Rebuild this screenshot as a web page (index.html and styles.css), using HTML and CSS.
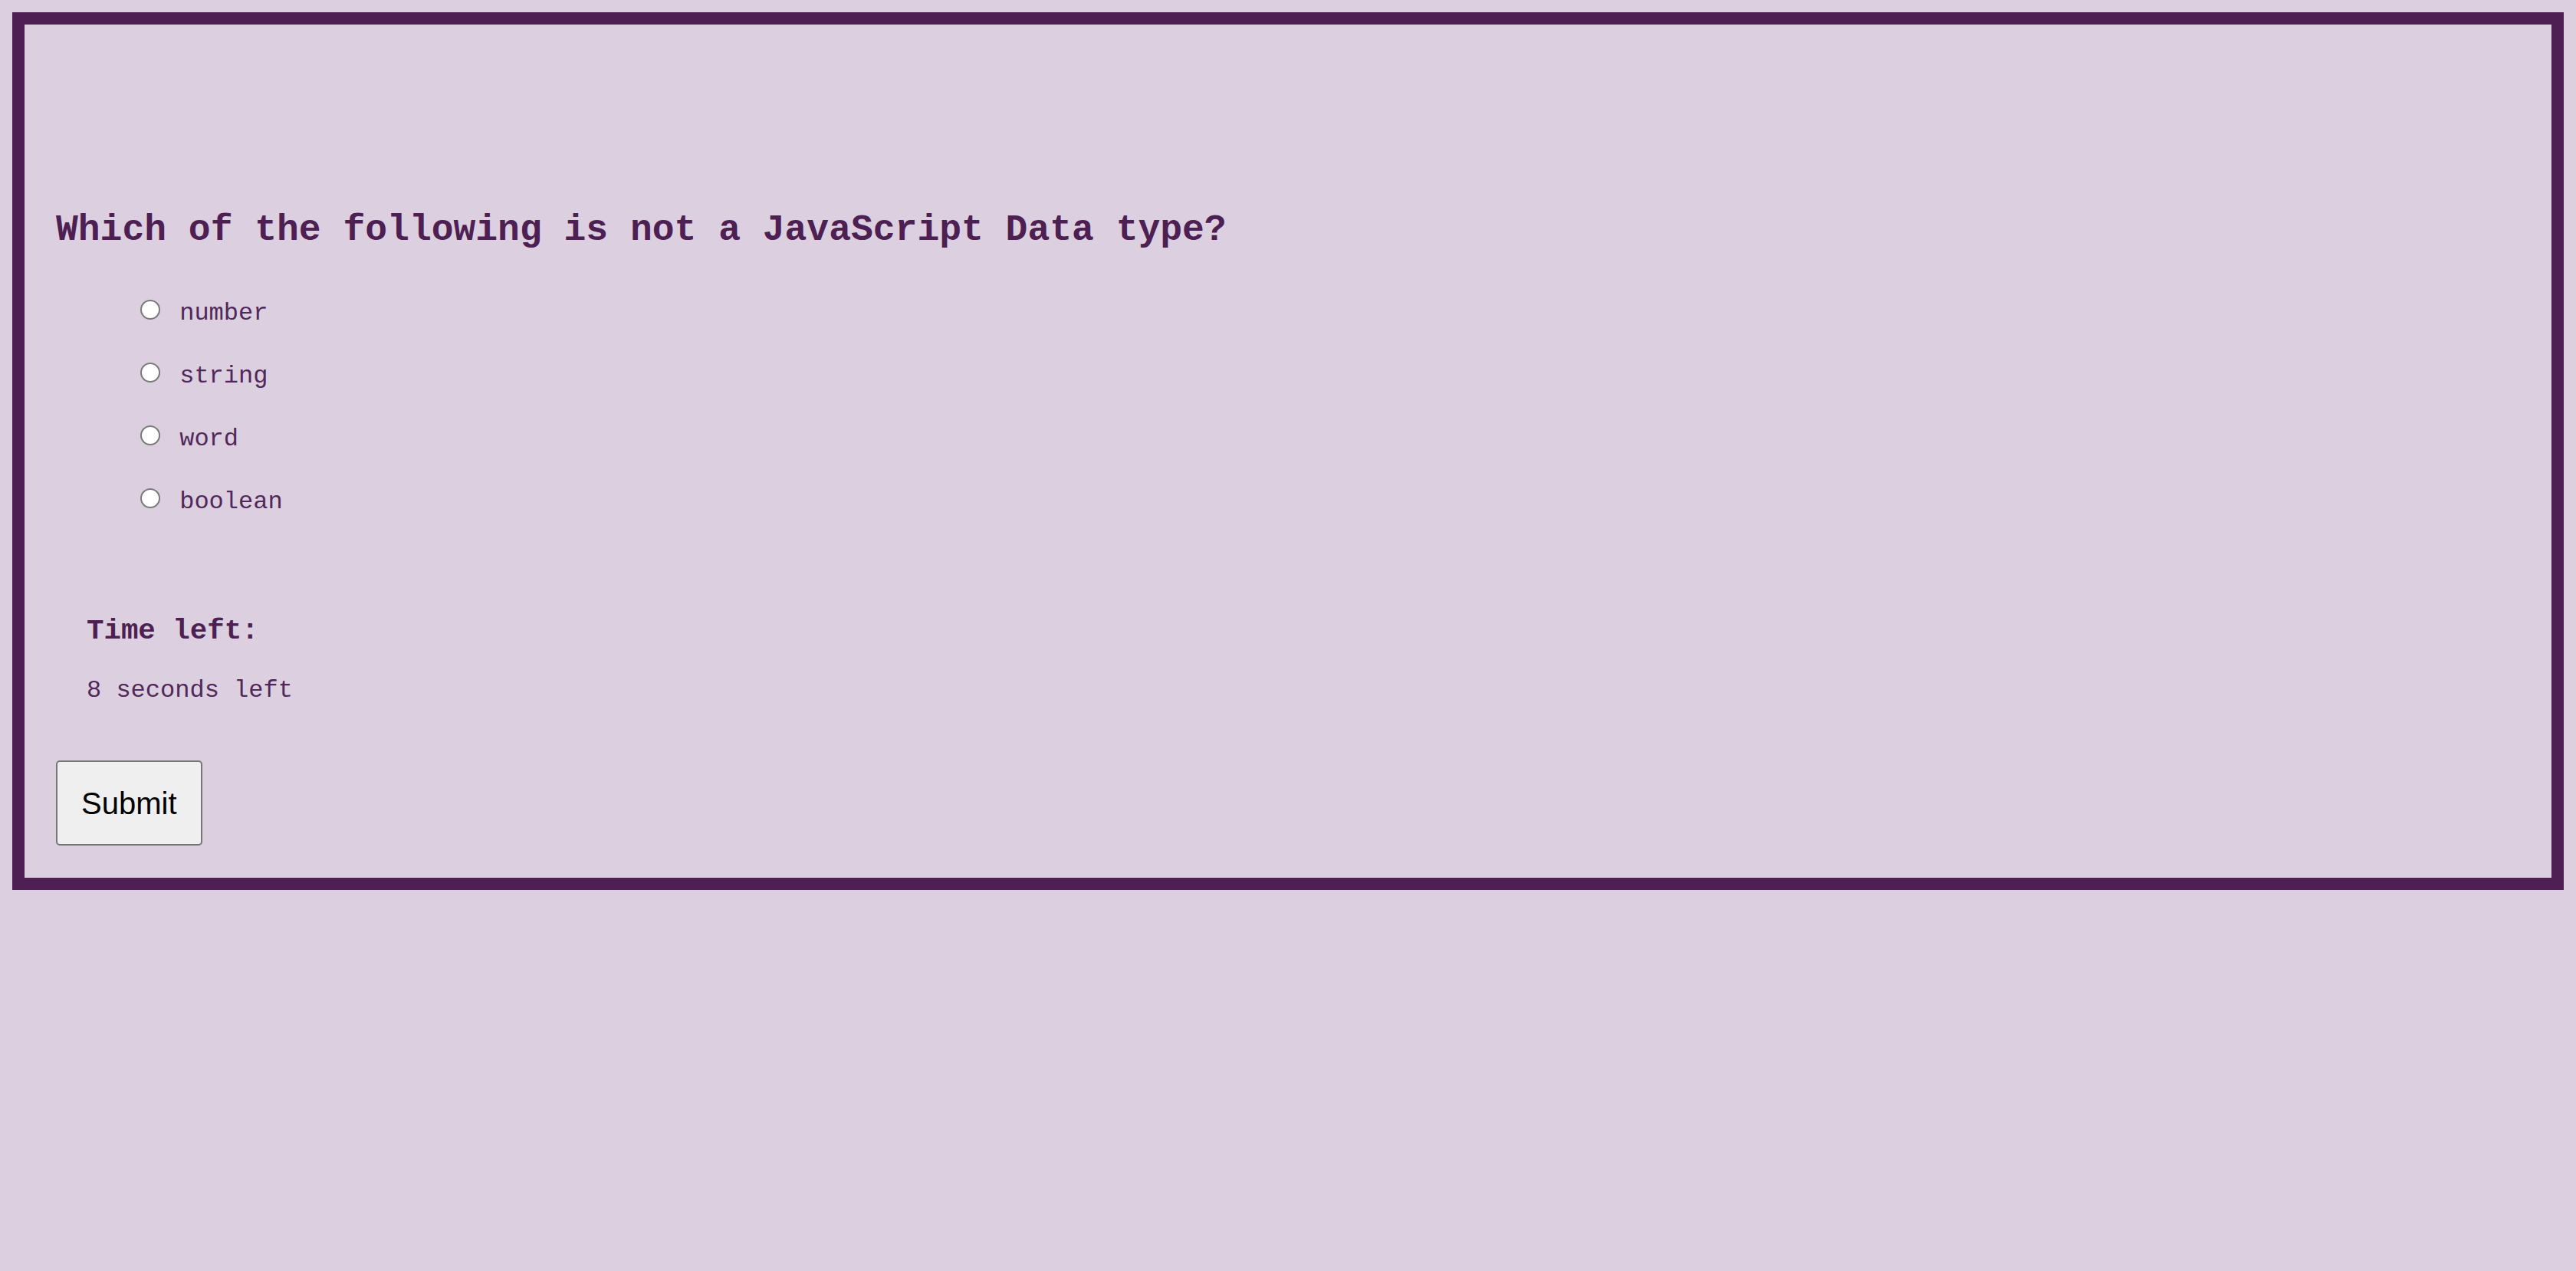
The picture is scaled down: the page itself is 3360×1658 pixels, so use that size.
FILE: index.html
```html
<!DOCTYPE html>
<html lang="en">
<head>
<meta charset="utf-8">
<title>Quiz</title>
<link rel="stylesheet" href="styles.css">
</head>
<body>
<main class="quiz">
  <h2 class="question">Which of the following is not a JavaScript Data type?</h2>
  <ul class="options">
    <li><label><input type="radio" name="answer" value="number"> number</label></li>
    <li><label><input type="radio" name="answer" value="string"> string</label></li>
    <li><label><input type="radio" name="answer" value="word"> word</label></li>
    <li><label><input type="radio" name="answer" value="boolean"> boolean</label></li>
  </ul>
  <section class="timer">
    <h3 class="timer-title">Time left:</h3>
    <p class="timer-value">8 seconds left</p>
  </section>
  <button class="submit" type="button">Submit</button>
</main>
</body>
</html>
```
FILE: styles.css
```css
html, body {
  background: #dccfdf;
}
body {
  margin: 16px;
  font-family: "Courier New", "Liberation Mono", monospace;
  color: #4d1f52;
}
.quiz {
  border: 16px solid #4d1f52;
  padding: 0 41px 42px 41px;
  display: flex;
  flex-direction: column;
  align-items: flex-start;
}
.question {
  margin: 241px 0 0 0;
  font-size: 48px;
  font-weight: bold;
  line-height: 54px;
}
.options {
  list-style: none;
  margin: 58px 0 0 0;
  padding: 0 0 0 100px;
  display: flex;
  flex-direction: column;
  gap: 40px;
}
.options li {
  font-size: 32px;
  line-height: 36px;
  color: #50285a;
}
.options input {
  appearance: none;
  -webkit-appearance: none;
  box-sizing: border-box;
  width: 26px;
  height: 26px;
  margin: 6px 6px 0 10px;
  border: 2px solid #7a7a7a;
  border-radius: 50%;
  background: #ffffff;
  vertical-align: baseline;
}
.timer {
  margin: 129px 0 0 40px;
}
.timer-title {
  margin: 0;
  font-size: 37.44px;
  line-height: 42px;
  font-weight: bold;
}
.timer-value {
  margin: 39px 0 0 0;
  font-size: 32px;
  line-height: 36px;
  color: #50285a;
}
.submit {
  margin-top: 73px;
  font-family: "Liberation Sans", Arial, sans-serif;
  font-size: 40px;
  line-height: 46px;
  padding: 31px 31px 30px;
  color: #000;
  background: #efefef;
  border: 2px solid #767676;
  border-radius: 5px;
}
```
